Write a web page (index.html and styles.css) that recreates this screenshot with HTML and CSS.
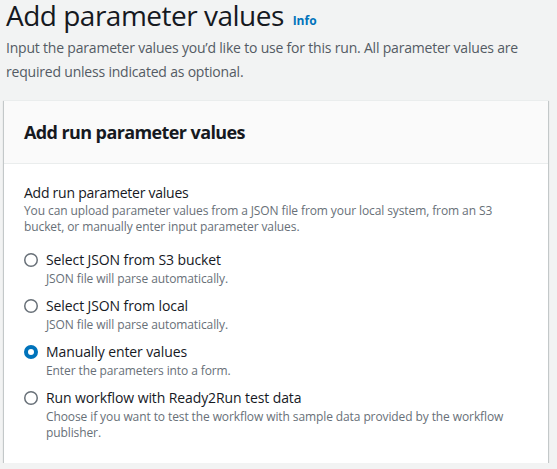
FILE: index.html
```html
<!DOCTYPE html>
<html lang="en">
<head>
<meta charset="utf-8">
<title>Add parameter values</title>
<link rel="stylesheet" href="styles.css">
</head>
<body>
<div class="page">
  <header class="page-header">
    <h1 class="title">Add parameter values <a class="info" href="#">Info</a></h1>
    <p class="subtitle">Input the parameter values you’d like to use for this run. All parameter values are required unless indicated as optional.</p>
  </header>
  <section class="card">
    <div class="card-header">
      <h2 class="card-title">Add run parameter values</h2>
    </div>
    <div class="card-body">
      <div class="field-label">Add run parameter values</div>
      <div class="field-desc">You can upload parameter values from a JSON file from your local system, from an S3 bucket, or manually enter input parameter values.</div>
      <div class="radio-group">
        <div class="radio">
          <span class="radio-control"><svg width="14" height="14" viewBox="0 0 14 14"><circle cx="7" cy="7" r="6.25" fill="#fff" stroke="#687078" stroke-width="1.5"/></svg></span>
          <div class="radio-text">
            <div class="radio-label">Select JSON from S3 bucket</div>
            <div class="radio-desc">JSON file will parse automatically.</div>
          </div>
        </div>
        <div class="radio">
          <span class="radio-control"><svg width="14" height="14" viewBox="0 0 14 14"><circle cx="7" cy="7" r="6.25" fill="#fff" stroke="#687078" stroke-width="1.5"/></svg></span>
          <div class="radio-text">
            <div class="radio-label">Select JSON from local</div>
            <div class="radio-desc">JSON file will parse automatically.</div>
          </div>
        </div>
        <div class="radio">
          <span class="radio-control"><svg width="14" height="14" viewBox="0 0 14 14"><circle cx="7" cy="7" r="5" fill="#fff" stroke="#0073bb" stroke-width="4"/></svg></span>
          <div class="radio-text">
            <div class="radio-label">Manually enter values</div>
            <div class="radio-desc">Enter the parameters into a form.</div>
          </div>
        </div>
        <div class="radio">
          <span class="radio-control"><svg width="14" height="14" viewBox="0 0 14 14"><circle cx="7" cy="7" r="6.25" fill="#fff" stroke="#687078" stroke-width="1.5"/></svg></span>
          <div class="radio-text">
            <div class="radio-label">Run workflow with Ready2Run test data</div>
            <div class="radio-desc">Choose if you want to test the workflow with sample data provided by the workflow publisher.</div>
          </div>
        </div>
      </div>
    </div>
  </section>
</div>
</body>
</html>
```
FILE: styles.css
```css
* { box-sizing: border-box; }
html, body {
  margin: 0;
  padding: 0;
  background: #f2f3f3;
}
body {
  font-family: "Open Sans", "Noto Sans", "Liberation Sans", sans-serif;
  color: #16191f;
}
.page {
  padding: 0 9px 0 4px;
}
.page-header {
  padding: 0 0 0 2px;
}
.title {
  margin: 0;
  font-size: 28px;
  line-height: 30px;
  font-weight: 400;
  color: #16191f;
  letter-spacing: -0.5px;
}
.info {
  font-size: 12px;
  font-weight: 700;
  color: #0073bb;
  text-decoration: none;
  letter-spacing: 0;
  margin-left: 2px;
  vertical-align: 1px;
}
.subtitle {
  margin: 0;
  font-size: 14px;
  line-height: 24px;
  color: #545b64;
  letter-spacing: -0.2px;
}
.card {
  margin-top: 16px;
  background: #fff;
  border-top: 1px solid #eaeded;
  box-shadow: 0 1px 1px 0 rgba(0,28,36,.3), 1px 1px 1px 0 rgba(0,28,36,.15), -1px 1px 1px 0 rgba(0,28,36,.15);
}
.card-header {
  background: #fafafa;
  border-bottom: 1px solid #eaeded;
  padding: 20px;
}
.card-title {
  margin: 0;
  font-size: 18px;
  line-height: 22px;
  font-weight: 700;
  color: #16191f;
  letter-spacing: -0.6px;
}
.card-body {
  padding: 18px 20px 22px 20px;
}
.field-label {
  font-size: 14px;
  line-height: 22px;
  color: #16191f;
  letter-spacing: -0.25px;
}
.field-desc {
  margin-top: -1px;
  font-size: 12px;
  line-height: 16px;
  color: #687078;
  letter-spacing: -0.1px;
}
.radio-group {
  margin-top: 14px;
  display: flex;
  flex-direction: column;
  gap: 8px;
}
.radio {
  display: flex;
  align-items: flex-start;
  gap: 8px;
}
.radio-control {
  display: flex;
  width: 14px;
  height: 22px;
  align-items: center;
  flex: none;
}
.radio-control svg { display: block; }
.radio-label {
  font-size: 14px;
  line-height: 22px;
  color: #16191f;
  letter-spacing: -0.1px;
}
.radio-desc {
  font-size: 12px;
  line-height: 16px;
  color: #687078;
  letter-spacing: -0.1px;
}
```
